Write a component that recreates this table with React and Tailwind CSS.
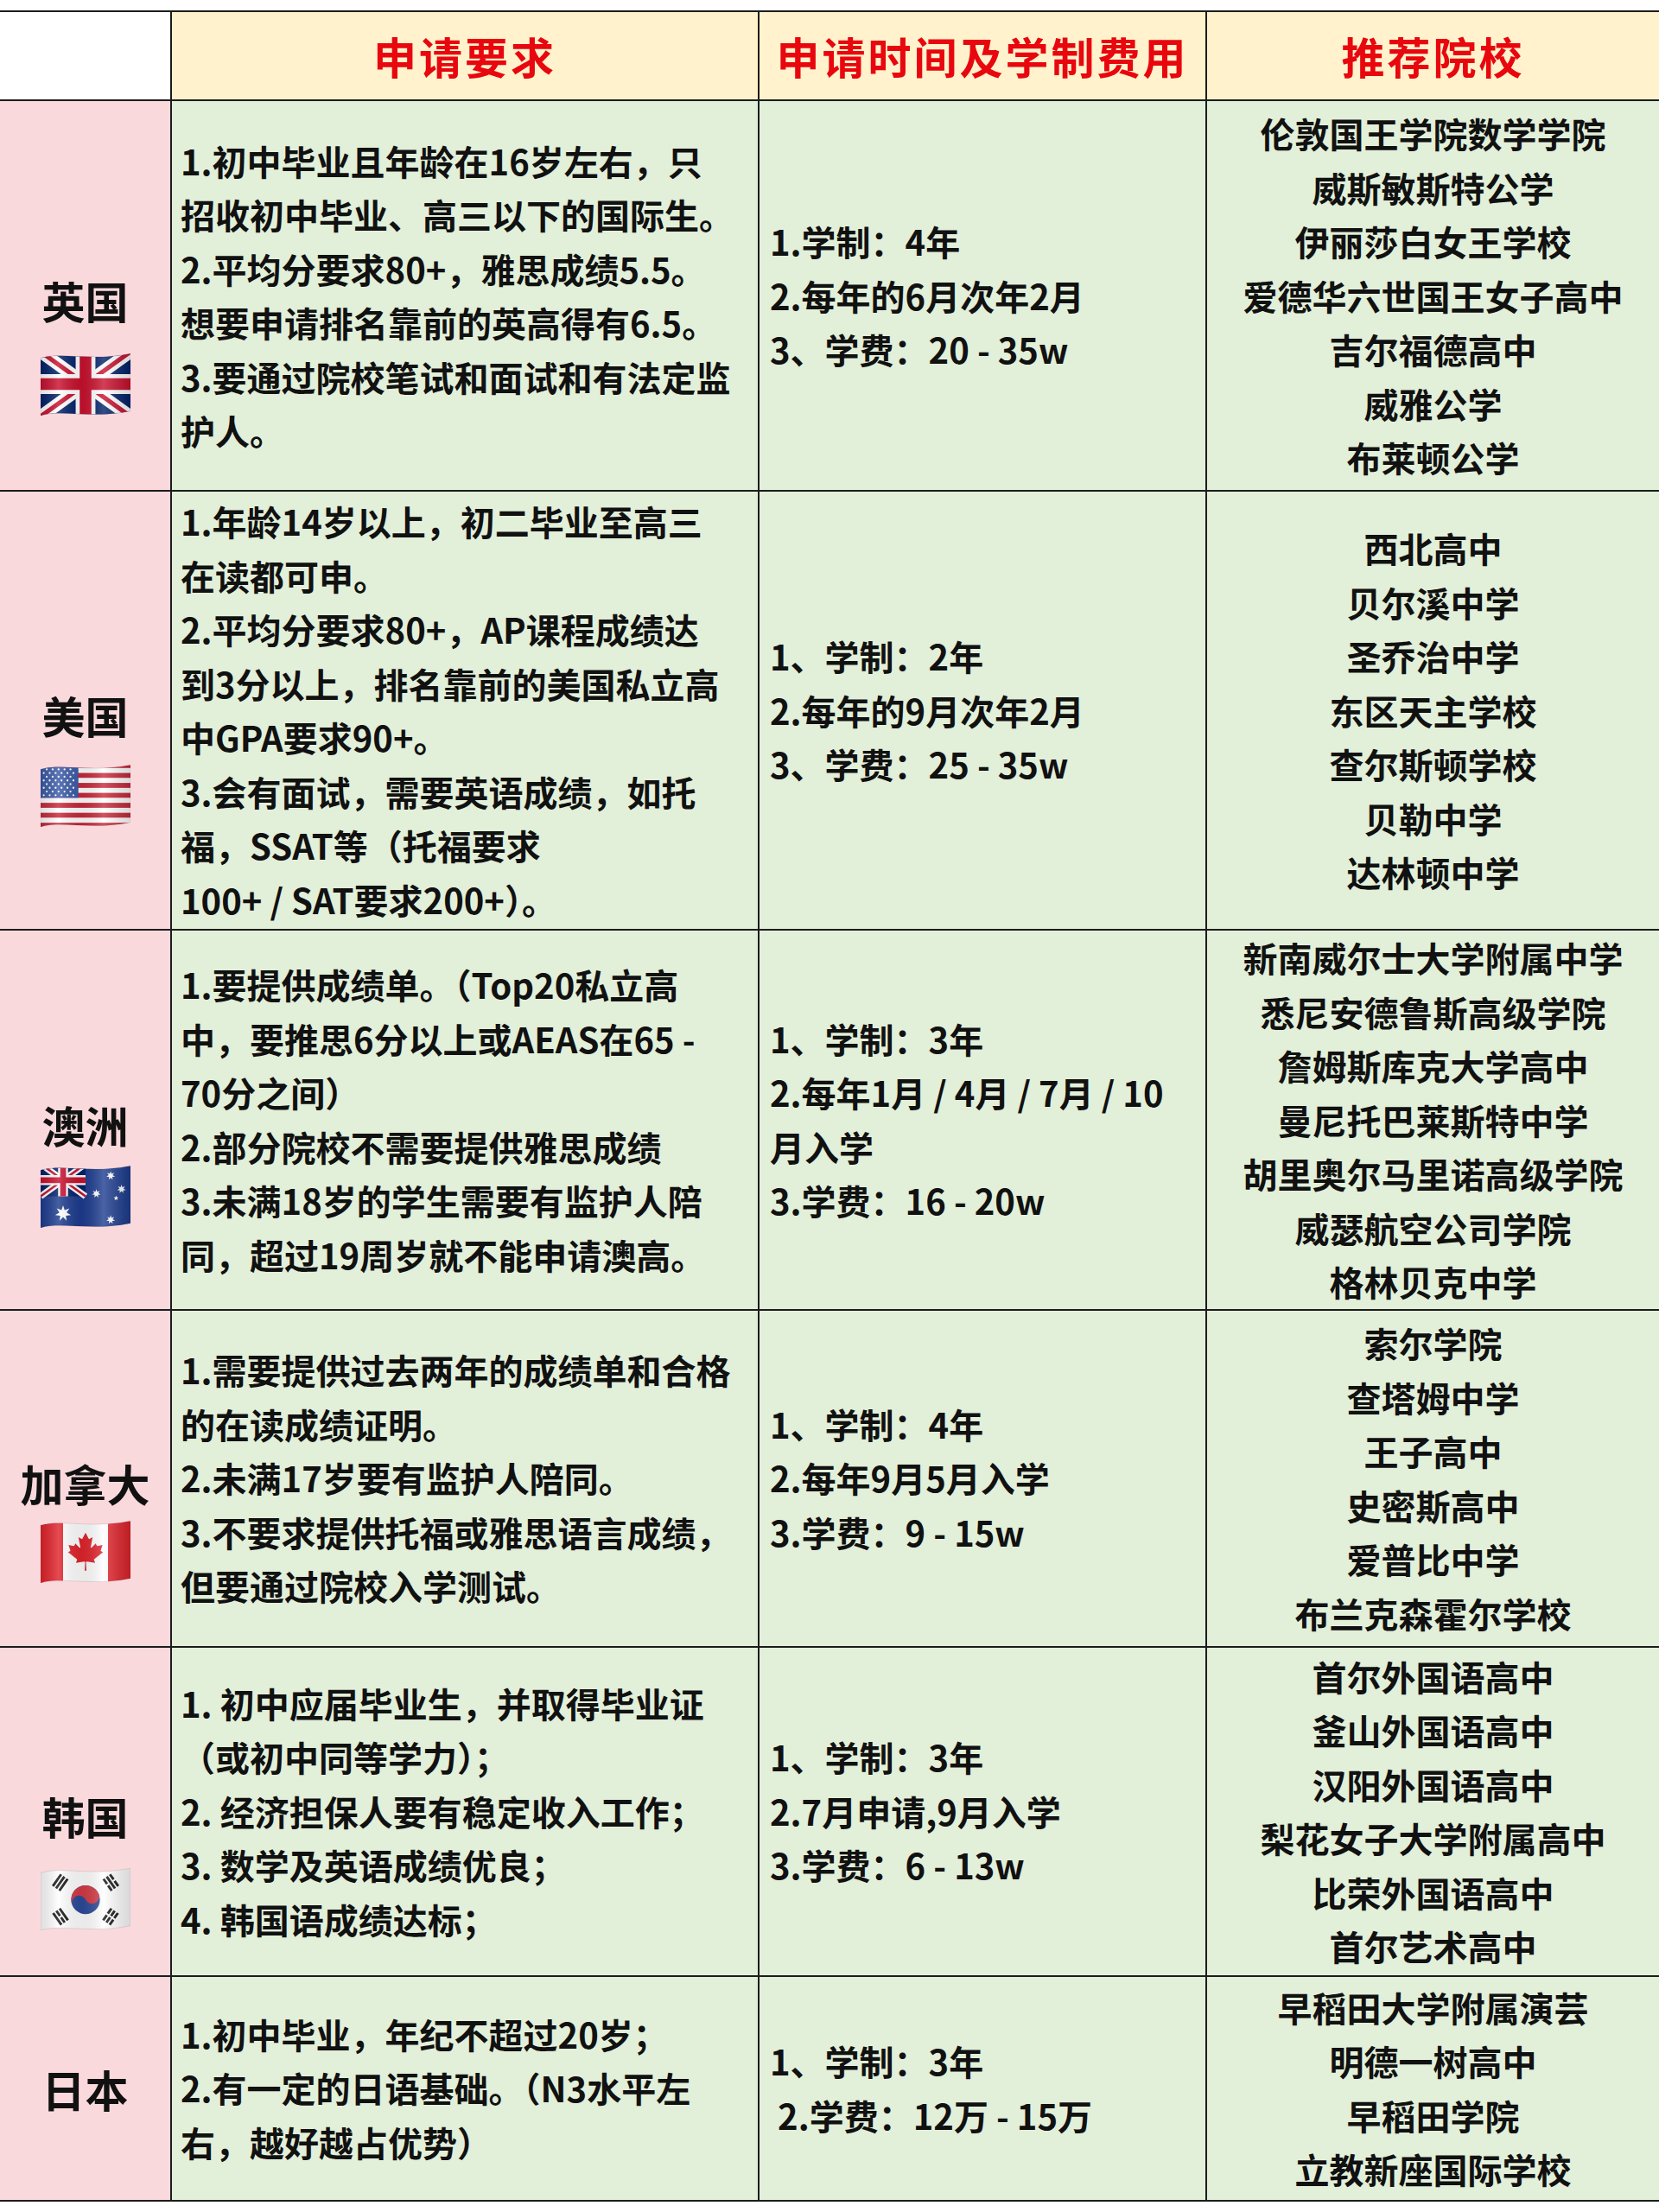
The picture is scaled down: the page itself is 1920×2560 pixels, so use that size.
import React from "react";

const FONT = { fontFamily: "'Noto Sans CJK SC', 'Noto Sans', sans-serif" };

function starPoints(cx, cy, r, n = 7, inner = 0.45) {
  const pts = [];
  for (let i = 0; i < n * 2; i++) {
    const rad = i % 2 === 0 ? r : r * inner;
    const a = (Math.PI * i) / n - Math.PI / 2;
    pts.push(`${(cx + rad * Math.cos(a)).toFixed(2)},${(cy + rad * Math.sin(a)).toFixed(2)}`);
  }
  return pts.join(" ");
}

function UnionJack() {
  return (
    <g>
      <rect width="100" height="72" fill="#012169" />
      <path d="M0,0 L100,72 M100,0 L0,72" stroke="#fff" strokeWidth="14" />
      <path d="M0,0 L100,72 M100,0 L0,72" stroke="#C8102E" strokeWidth="5" />
      <path d="M50,0 V72 M0,36 H100" stroke="#fff" strokeWidth="22" />
      <path d="M50,0 V72 M0,36 H100" stroke="#C8102E" strokeWidth="13" />
    </g>
  );
}

function FlagContent({ kind }) {
  if (kind === "uk") return <UnionJack />;
  if (kind === "us") {
    const sh = 72 / 13;
    const stripes = [];
    for (let i = 0; i < 13; i++) {
      stripes.push(
        <rect key={i} x="0" y={i * sh} width="100" height={sh + 0.2} fill={i % 2 === 0 ? "#C7283A" : "#ffffff"} />
      );
    }
    const stars = [];
    for (let r = 0; r < 9; r++) {
      const cols = r % 2 === 0 ? 6 : 5;
      for (let c = 0; c < cols; c++) {
        const x = r % 2 === 0 ? 3.5 + c * 6.6 : 6.8 + c * 6.6;
        stars.push(<circle key={`${r}-${c}`} cx={x} cy={3 + r * 4.1} r="1.1" fill="#fff" />);
      }
    }
    return (
      <g>
        {stripes}
        <rect x="0" y="0" width="42" height={sh * 7} fill="#3A5BA8" />
        {stars}
      </g>
    );
  }
  if (kind === "au") {
    return (
      <g>
        <rect width="100" height="72" fill="#1D3C8F" />
        <g transform="scale(0.5)">
          <UnionJack />
        </g>
        <polygon points={starPoints(25, 55, 9)} fill="#fff" />
        <polygon points={starPoints(78, 62, 5)} fill="#fff" />
        <polygon points={starPoints(62, 33, 5)} fill="#fff" />
        <polygon points={starPoints(78, 13, 5)} fill="#fff" />
        <polygon points={starPoints(90, 28, 5)} fill="#fff" />
        <polygon points={starPoints(84, 38, 2.8, 5)} fill="#fff" />
      </g>
    );
  }
  if (kind === "ca") {
    return (
      <g>
        <rect width="100" height="72" fill="#fff" />
        <rect x="0" y="0" width="25" height="72" fill="#E0242B" />
        <rect x="75" y="0" width="25" height="72" fill="#E0242B" />
        <g transform="translate(50,36) scale(0.0105)">
          <path
            fill="#E0242B"
            d="m-90 2030 45-863a95 95 0 0 0-111-98l-859 151 116-320a65 65 0 0 0-20-73l-941-762 212-99a65 65 0 0 0 34-79l-186-572 542 115a65 65 0 0 0 73-38l105-247 423 454a65 65 0 0 0 111-57l-204-1052 327 189a65 65 0 0 0 91-27l332-652 332 652a65 65 0 0 0 91 27l327-189-204 1052a65 65 0 0 0 111 57l423-454 105 247a65 65 0 0 0 73 38l542-115-186 572a65 65 0 0 0 34 79l212 99-941 762a65 65 0 0 0-20 73l116 320-859-151a95 95 0 0 0-111 98l45 863z"
          />
        </g>
      </g>
    );
  }
  if (kind === "kr") {
    const tri = (cx, cy, rot, pattern) => (
      <g transform={`translate(${cx},${cy}) rotate(${rot})`}>
        {pattern.map((broken, i) =>
          broken ? (
            <g key={i}>
              <rect x="-8" y={-6 + i * 4.4} width="7" height="2.8" fill="#111" />
              <rect x="1" y={-6 + i * 4.4} width="7" height="2.8" fill="#111" />
            </g>
          ) : (
            <rect key={i} x="-8" y={-6 + i * 4.4} width="16" height="2.8" fill="#111" />
          )
        )}
      </g>
    );
    return (
      <g>
        <rect width="100" height="72" fill="#fff" />
        <circle cx="50" cy="37" r="16" fill="#2C4A9A" />
        <path d="M34,37 A16,16 0 0 1 66,37 A8,8 0 0 1 50,37 A8,8 0 0 0 34,37 Z" fill="#D33A45" transform="rotate(-25 50 37)" />
        {tri(22, 18, -55, [false, false, false])}
        {tri(78, 18, 55, [true, false, true])}
        {tri(22, 56, 55, [false, true, false])}
        {tri(78, 56, -55, [true, true, true])}
      </g>
    );
  }
  return null;
}

function Flag({ kind }) {
  const clipId = `clip-${kind}`;
  const gradId = `shade-${kind}`;
  return (
    <svg width="104" height="75" viewBox="0 0 100 72" className="block">
      <defs>
        <clipPath id={clipId}>
          <path d="M0,7 C25,0 55,11 100,2 L100,66 C55,75 25,64 0,71 Z" />
        </clipPath>
        <linearGradient id={gradId} x1="0" y1="0" x2="1" y2="0">
          <stop offset="0%" stopColor="#000" stopOpacity="0.12" />
          <stop offset="20%" stopColor="#fff" stopOpacity="0.18" />
          <stop offset="45%" stopColor="#000" stopOpacity="0.08" />
          <stop offset="70%" stopColor="#fff" stopOpacity="0.2" />
          <stop offset="100%" stopColor="#000" stopOpacity="0.15" />
        </linearGradient>
      </defs>
      <g clipPath={`url(#${clipId})`}>
        <FlagContent kind={kind} />
        <rect width="100" height="72" fill={`url(#${gradId})`} />
      </g>
      <path d="M0,7 C25,0 55,11 100,2 L100,66 C55,75 25,64 0,71 Z" fill="none" stroke="#000" strokeOpacity="0.12" strokeWidth="0.8" />
    </svg>
  );
}

const rows = [
  {
    name: "英国",
    flag: "uk",
    h: "h-[452px]",
    spacer: "h-[117px]",
    gap: "mt-[32px]",
    req: [
      "1.初中毕业且年龄在16岁左右，只",
      "招收初中毕业、高三以下的国际生。",
      "2.平均分要求80+，雅思成绩5.5。",
      "想要申请排名靠前的英高得有6.5。",
      "3.要通过院校笔试和面试和有法定监",
      "护人。",
    ],
    time: ["1.学制：4年", "2.每年的6月次年2月", "3、学费：20 - 35w"],
    schools: ["伦敦国王学院数学学院", "威斯敏斯特公学", "伊丽莎白女王学校", "爱德华六世国王女子高中", "吉尔福德高中", "威雅公学", "布莱顿公学"],
  },
  {
    name: "美国",
    flag: "us",
    h: "h-[508px]",
    spacer: "h-[113px]",
    gap: "mt-[28px]",
    req: [
      "1.年龄14岁以上，初二毕业至高三",
      "在读都可申。",
      "2.平均分要求80+，AP课程成绩达",
      "到3分以上，排名靠前的美国私立高",
      "中GPA要求90+。",
      "3.会有面试，需要英语成绩，如托",
      "福，SSAT等（托福要求",
      "100+ / SAT要求200+）。",
    ],
    time: ["1、学制：2年", "2.每年的9月次年2月", "3、学费：25 - 35w"],
    schools: ["西北高中", "贝尔溪中学", "圣乔治中学", "东区天主学校", "查尔斯顿学校", "贝勒中学", "达林顿中学"],
  },
  {
    name: "澳洲",
    flag: "au",
    h: "h-[439px]",
    spacer: "h-[103px]",
    gap: "mt-[18px]",
    req: [
      "1.要提供成绩单。（Top20私立高",
      "中，要推思6分以上或AEAS在65 -",
      "70分之间）",
      "2.部分院校不需要提供雅思成绩",
      "3.未满18岁的学生需要有监护人陪",
      "同，超过19周岁就不能申请澳高。",
    ],
    time: ["1、学制：3年", "2.每年1月 / 4月 / 7月 / 10", "月入学", "3.学费：16 - 20w"],
    schools: ["新南威尔士大学附属中学", "悉尼安德鲁斯高级学院", "詹姆斯库克大学高中", "曼尼托巴莱斯特中学", "胡里奥尔马里诺高级学院", "威瑟航空公司学院", "格林贝克中学"],
  },
  {
    name: "加拿大",
    flag: "ca",
    h: "h-[390px]",
    spacer: "h-[99px]",
    gap: "mt-[14px]",
    req: [
      "1.需要提供过去两年的成绩单和合格",
      "的在读成绩证明。",
      "2.未满17岁要有监护人陪同。",
      "3.不要求提供托福或雅思语言成绩，",
      "但要通过院校入学测试。",
    ],
    time: ["1、学制：4年", "2.每年9月5月入学", "3.学费：9 - 15w"],
    schools: ["索尔学院", "查塔姆中学", "王子高中", "史密斯高中", "爱普比中学", "布兰克森霍尔学校"],
  },
  {
    name: "韩国",
    flag: "kr",
    h: "h-[381px]",
    spacer: "h-[116px]",
    gap: "mt-[31px]",
    req: [
      "1. 初中应届毕业生，并取得毕业证",
      "（或初中同等学力）；",
      "2. 经济担保人要有稳定收入工作；",
      "3. 数学及英语成绩优良；",
      "4. 韩国语成绩达标；",
    ],
    time: ["1、学制：3年", "2.7月申请,9月入学", "3.学费：6 - 13w"],
    schools: ["首尔外国语高中", "釜山外国语高中", "汉阳外国语高中", "梨花女子大学附属高中", "比荣外国语高中", "首尔艺术高中"],
  },
  {
    name: "日本",
    flag: null,
    h: "h-[260px]",
    spacer: "",
    gap: "",
    req: ["1.初中毕业，年纪不超过20岁；", "2.有一定的日语基础。（N3水平左", "右，越好越占优势）"],
    time: ["1、学制：3年", " 2.学费：12万 - 15万"],
    schools: ["早稻田大学附属演芸", "明德一树高中", "早稻田学院", "立教新座国际学校"],
  },
];

const cellBase = "border-2 border-[#1c1c1c] first:border-l-0 last:border-r-0 align-middle p-0";

export default function App() {
  return (
    <div className="w-[1920px] h-[2560px] bg-white pt-[12px]" style={FONT}>
      <table className="w-[1920px] table-fixed border-collapse text-[#111]">
        <colgroup>
          <col className="w-[198px]" />
          <col className="w-[680px]" />
          <col className="w-[518px]" />
          <col className="w-[524px]" />
        </colgroup>
        <thead>
          <tr className="h-[103px]">
            <th className={`${cellBase} bg-white`}></th>
            <th className={`${cellBase} bg-[#fff2cc] text-[50px] font-bold tracking-[3px] text-[#e8070e] text-center`}>申请要求</th>
            <th className={`${cellBase} bg-[#fff2cc] text-[50px] font-bold tracking-[3px] text-[#e8070e] text-center`}>申请时间及学制费用</th>
            <th className={`${cellBase} bg-[#fff2cc] text-[50px] font-bold tracking-[3px] text-[#e8070e] text-center`}>推荐院校</th>
          </tr>
        </thead>
        <tbody>
          {rows.map((r) => (
            <tr key={r.name} className={r.h}>
              <td className={`${cellBase} bg-[#fad9dd]`}>
                <div className="flex flex-col items-center">
                  {r.flag && <div className={r.spacer}></div>}
                  <div className="text-[50px] leading-[56px] font-bold whitespace-nowrap">{r.name}</div>
                  {r.flag && (
                    <div className={r.gap}>
                      <Flag kind={r.flag} />
                    </div>
                  )}
                </div>
              </td>
              <td className={`${cellBase} bg-[#e2efd9] pl-[10px]`}>
                <div className="text-[40px] leading-[62.5px] font-semibold">
                  {r.req.map((l, i) => (
                    <div key={i} className="whitespace-pre">{l}</div>
                  ))}
                </div>
              </td>
              <td className={`${cellBase} bg-[#e2efd9] pl-[12px]`}>
                <div className="text-[40px] leading-[62.5px] font-semibold">
                  {r.time.map((l, i) => (
                    <div key={i} className="whitespace-pre">{l}</div>
                  ))}
                </div>
              </td>
              <td className={`${cellBase} bg-[#e2efd9]`}>
                <div className="text-[40px] leading-[62.5px] font-semibold text-center">
                  {r.schools.map((l, i) => (
                    <div key={i} className="whitespace-nowrap">{l}</div>
                  ))}
                </div>
              </td>
            </tr>
          ))}
        </tbody>
      </table>
    </div>
  );
}
